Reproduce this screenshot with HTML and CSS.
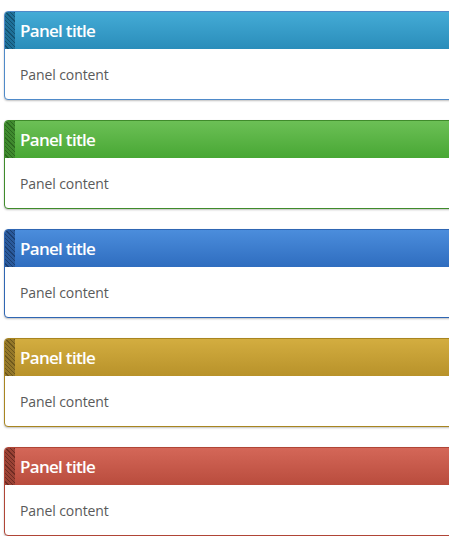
FILE: index.html
```html
<!DOCTYPE html>
<html>
<head>
<meta charset="utf-8">
<link rel="stylesheet" href="styles.css">
</head>
<body>
<div class="stack">
  <div class="panel info">
    <div class="panel-heading"><span class="hatch"></span><span class="title">Panel title</span></div>
    <div class="panel-body">Panel content</div>
  </div>
  <div class="panel success">
    <div class="panel-heading"><span class="hatch"></span><span class="title">Panel title</span></div>
    <div class="panel-body">Panel content</div>
  </div>
  <div class="panel primary">
    <div class="panel-heading"><span class="hatch"></span><span class="title">Panel title</span></div>
    <div class="panel-body">Panel content</div>
  </div>
  <div class="panel warning">
    <div class="panel-heading"><span class="hatch"></span><span class="title">Panel title</span></div>
    <div class="panel-body">Panel content</div>
  </div>
  <div class="panel danger">
    <div class="panel-heading"><span class="hatch"></span><span class="title">Panel title</span></div>
    <div class="panel-body">Panel content</div>
  </div>
</div>
</body>
</html>
```
FILE: styles.css
```css
html, body {
  margin: 0;
  padding: 0;
  background: #fff;
  overflow: hidden;
}
body {
  font-family: "Open Sans", "DejaVu Sans", sans-serif;
}
.stack {
  display: flex;
  flex-direction: column;
  gap: 20px;
  padding: 11px 0 0 4px;
  width: 480px;
}
.panel {
  border: 1px solid #4a86c8;
  border-radius: 4px;
  background: #fff;
  box-shadow: 0 1px 2px rgba(0,0,0,0.25);
  overflow: hidden;
}
.panel-heading {
  display: flex;
  align-items: center;
  height: 37px;
  color: #fff;
}
.hatch {
  align-self: stretch;
  width: 10px;
  flex: none;
}
.title {
  padding-left: 5px;
  font-size: 17px;
  font-weight: 600;
  letter-spacing: -0.7px;
}
.panel-body {
  height: 50px;
  display: flex;
  align-items: center;
  padding-left: 15px;
  font-size: 14px;
  color: #5a5a5a;
  letter-spacing: -0.1px;
}
.info { border-color: #4f8ac9; }
.info .panel-heading { background: linear-gradient(#44abd6, #2a8dba); }
.info .hatch { background: repeating-linear-gradient(45deg, #1e7199 0 2px, #135171 2px 3px); }

.success { border-color: #3f8b2b; }
.success .panel-heading { background: linear-gradient(#6cc056, #48a734); }
.success .hatch { background: repeating-linear-gradient(45deg, #3f8a2e 0 2px, #2c6a1f 2px 3px); }

.primary { border-color: #2f66b3; }
.primary .panel-heading { background: linear-gradient(#4b8ddc, #2f6dbf); }
.primary .hatch { background: repeating-linear-gradient(45deg, #2a5a9c 0 2px, #1b3f72 2px 3px); }

.warning { border-color: #a88520; }
.warning .panel-heading { background: linear-gradient(#d3ad40, #b8922a); }
.warning .hatch { background: repeating-linear-gradient(45deg, #94782a 0 2px, #6e581c 2px 3px); }

.danger { border-color: #b04536; }
.danger .panel-heading { background: linear-gradient(#d46758, #b94c3d); }
.danger .hatch { background: repeating-linear-gradient(45deg, #9a4235 0 2px, #6e2b22 2px 3px); }
```
